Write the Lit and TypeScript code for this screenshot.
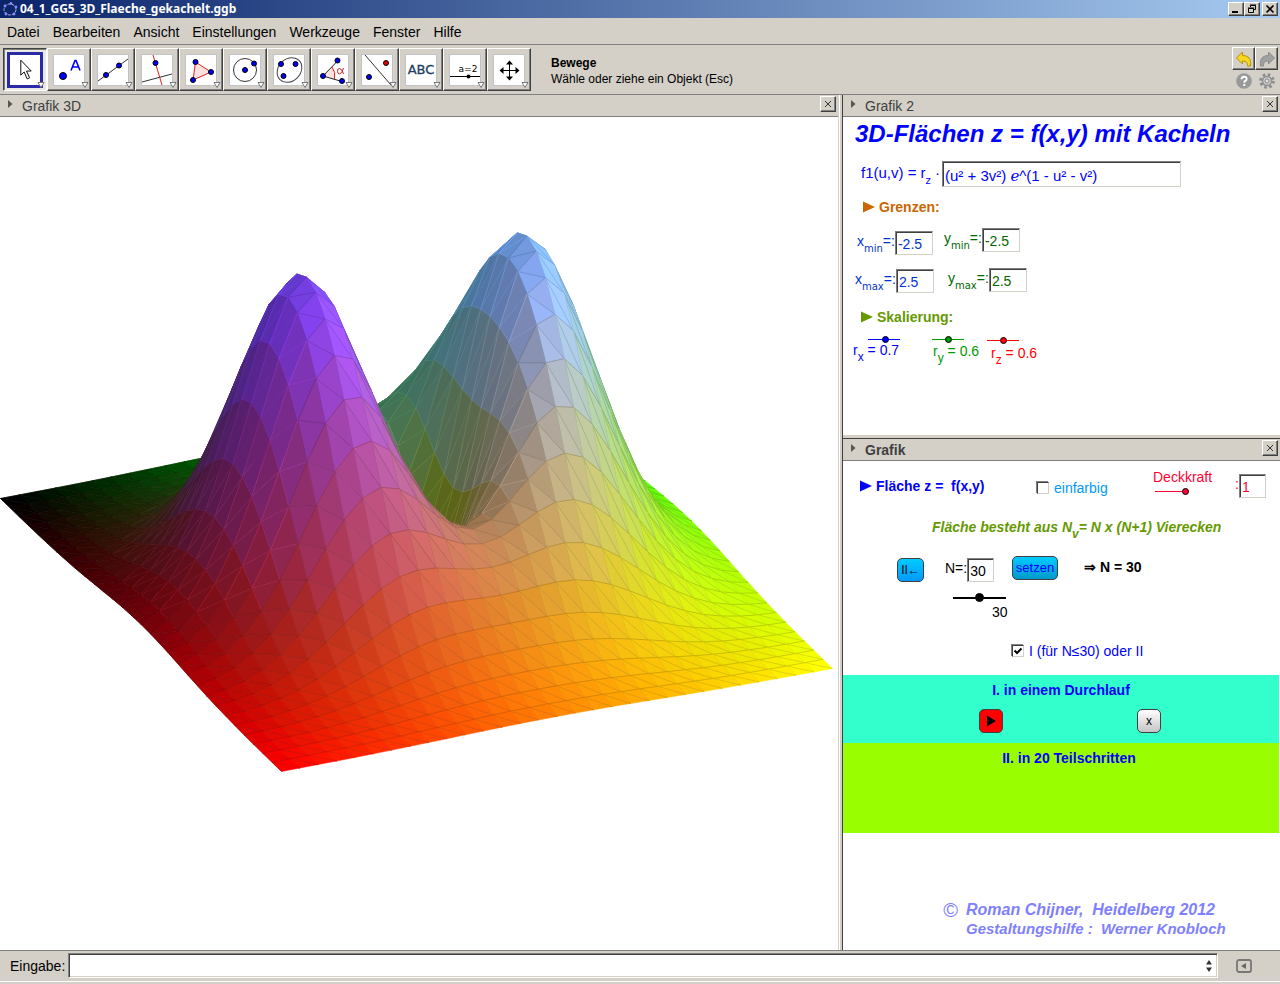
import { LitElement, html, svg, css } from "lit";
import { customElement, property } from "lit/decorators.js";
import { styleMap } from "lit/directives/style-map.js";

const MENUS = ["Datei", "Bearbeiten", "Ansicht", "Einstellungen", "Werkzeuge", "Fenster", "Hilfe"];

const dot = (x: number, y: number, r = 2.5, fill = "#0000ff") =>
  svg`<circle cx=${x} cy=${y} r=${r} fill=${fill} stroke="#000" stroke-width="1"/>`;

const TOOLS = [
  {
    name: "Bewege",
    icon: svg`<path d="M11.5 5.5v16l3.6-3.4 3.2 7.4 2.6-1.2-3.3-7.2h5z" fill="#fff" stroke="#000"/>`,
  },
  {
    name: "Neuer Punkt",
    icon: svg`${dot(10, 22, 3.5)}<path d="M18 16.500l4-10h1l4 10M19.500 13h6" fill="none" stroke="#0000ff" stroke-width="1.600"/>`,
  },
  {
    name: "Gerade",
    icon: svg`<path d="M1 27L31 5" stroke="#333" fill="none"/>${dot(9, 21)}${dot(22, 11.5)}`,
  },
  {
    name: "Senkrechte",
    icon: svg`<path d="M1 28L31 20" stroke="#333" fill="none"/><path d="M12 1l9 30" stroke="#e02020" fill="none"/>${dot(14.5, 9)}`,
  },
  {
    name: "Vieleck",
    icon: svg`<path d="M10.500 8L26 18 8 26z" fill="#fbe0e0" stroke="#e02020"/>${dot(10.5, 8)}${dot(26, 18)}${dot(8, 26)}`,
  },
  {
    name: "Kreis",
    icon: svg`<circle cx="16" cy="16" r="11.500" fill="none" stroke="#333"/>${dot(16, 16)}${dot(25, 9.5)}`,
  },
  {
    name: "Ellipse",
    icon: svg`<ellipse cx="16.500" cy="16" rx="13.500" ry="11" transform="rotate(-45 16.500 16)" fill="none" stroke="#445"/>${dot(8, 10)}${dot(22.5, 10)}${dot(10.5, 22)}`,
  },
  {
    name: "Winkel",
    icon: svg`<path d="M6 22l9-9q4 5 3 12z" fill="#fbe0e0"/><path d="M15 13q4 5 2.500 12" fill="none" stroke="#e02020"/><path d="M21 6.500L6 22l19 5.500" fill="none" stroke="#222"/>
      <path d="M26.500 14q-1.500 6-4 6-2 0-2-2.800t2-2.700q2.500 0 4 5.500" fill="none" stroke="#d02020"/>${dot(6, 22)}${dot(20.5, 6.5)}${dot(25, 27)}`,
  },
  {
    name: "Spiegele",
    icon: svg`<path d="M4 1l26 30" stroke="#333" fill="none"/>${dot(8, 23)}${dot(25, 9, 2.5, "#e00000")}`,
  },
  {
    name: "Text",
    icon: svg`<text x="16" y="20" text-anchor="middle" class="abc">ABC</text>`,
  },
  {
    name: "Schieberegler",
    icon: svg`<text x="19" y="18" text-anchor="middle" class="aeq">a=2</text><path d="M1 22.500h30" stroke="#000"/><circle cx="19.500" cy="22.500" r="2"/>`,
  },
  {
    name: "Verschiebe Zeichenblatt",
    icon: svg`<path d="M16.500 8v17M8 16.500h17" stroke="#000"/><path d="M16.500 6.500l3.500 4h-7zM16.500 26.500l3.500-4h-7zM6.500 16.500l4-3.500v7zM26.500 16.500l-4-3.500v7z"/>`,
  },
];

const N = 30;
const RANGE = 2.5;

const height = (u: number, v: number) => (u * u + 3 * v * v) * Math.exp(1 - u * u - v * v);

const project = (u: number, v: number): [number, number] => [
  416.5 + 56.2 * u + 110.2 * v,
  466.5 + 54.6 * u - 20.6 * v - 109 * height(u, v),
];

const LIGHT = [0.62, 0.46, 0.62];

function brightness(u0: number, v0: number, u1: number, v1: number, u2: number, v2: number) {
  const w = (u: number, v: number) => [140 * u, 120 * v, 120 * height(u, v)];
  const a = w(u0, v0);
  const b = w(u1, v1);
  const c = w(u2, v2);
  const p = [b[0] - a[0], b[1] - a[1], b[2] - a[2]];
  const q = [c[0] - a[0], c[1] - a[1], c[2] - a[2]];
  let n = [p[1] * q[2] - p[2] * q[1], p[2] * q[0] - p[0] * q[2], p[0] * q[1] - p[1] * q[0]];
  const len = Math.hypot(n[0], n[1], n[2]) * (n[2] < 0 ? -1 : 1);
  n = n.map((k) => k / len);
  return 0.8 + 0.32 * (n[0] * LIGHT[0] + n[1] * LIGHT[1] + n[2] * LIGHT[2]);
}

const shade = (c: number[], f: number) =>
  `rgb(${c.map((k) => Math.max(0, Math.min(255, Math.round(k * f * 255)))).join(",")})`;

const pt = (p: [number, number]) => `${p[0].toFixed(1)} ${p[1].toFixed(1)}`;

@customElement("surface-plot")
class SurfacePlot extends LitElement {
  static styles = css`
    :host { display: block; width: 100%; }
    svg { display: block; width: 100%; height: auto; }
  `;

  private tiles() {
    const out: unknown[] = [];
    const step = (2 * RANGE) / N;
    for (let i = 0; i < N; i++) {
      for (let j = N - 1; j >= 0; j--) {
        const u0 = -RANGE + i * step;
        const v0 = -RANGE + j * step;
        const u1 = u0 + step;
        const v1 = v0 + step;
        const h = height(u0 + step / 2, v0 + step / 2);
        const color = [i / (N - 1), j / (N - 1), Math.min(1, h / (h < 0.7 ? 3.4 : 2.8))];
        const a = pt(project(u0, v0));
        const b = pt(project(u1, v0));
        const c = pt(project(u1, v1));
        const d = pt(project(u0, v1));
        const f1 = brightness(u0, v0, u1, v0, u1, v1);
        const f2 = brightness(u0, v0, u1, v1, u0, v1);
        const s1 = shade(color, f1);
        const s2 = shade(color, f2);
        const dim = Math.min(f1, f2) < 0.86;
        out.push(svg`<path d="M${a}L${c}L${d}Z" fill=${s2} stroke=${s2} stroke-width=".5"/>
          <path d="M${a}L${b}L${c}Z" fill=${s1} stroke=${s1} stroke-width=".5"/>
          <path d="M${a}L${c}" fill="none" stroke=${shade(color, f2 * (dim ? 1.2 : 0.76))} stroke-width=".5"/>
          <path d="M${a}L${d}" fill="none" stroke=${shade(color, f2 * (dim ? 1.25 : 0.76))} stroke-width=".7"/>
          <path d="M${a}L${b}" fill="none" stroke=${shade(color, f1 * (dim ? 1.45 : 0.82))} stroke-width=".8"/>`);
      }
    }
    return out;
  }

  render() {
    return html`<svg viewBox="0 0 838 833" role="img" aria-label="3D-Fläche">${this.tiles()}</svg>`;
  }
}

@customElement("view-header")
class ViewHeader extends LitElement {
  @property() name = "";
  @property({ type: Boolean }) active = false;

  static styles = css`
    :host { display: flex; align-items: center; box-sizing: border-box; height: 22px; background: #d4d0c8; border-bottom: 1px solid #808080; color: #404040; font: 14px/20px "Liberation Sans", sans-serif; }
    .arrow { width: 5px; height: 8px; margin: 0 9px 4px 8px; }
    .name { flex: 1; margin: 0; font: inherit; padding-top: 1px; }
    .bold { font-weight: bold; }
    .close { width: 16px; height: 16px; padding: 0; margin: 0 2px 4px; border: 1px solid; border-color: #fff #404040 #404040 #fff; box-shadow: inset -1px -1px #808080; background: #d4d0c8; }
    .close svg { display: block; margin: 3px; }
  `;

  render() {
    return html`<svg class="arrow" viewBox="0 0 5 8"><path d="M0 0l4.500 4L0 8z" fill="#555"/></svg>
      <h2 class="name ${this.active ? "bold" : ""}">${this.name}</h2>
      <button class="close" aria-label="Schließen">
        <svg width="8" height="8" viewBox="0 0 8 8"><path d="M1 1l6 6M7 1L1 7" stroke="#333"/></svg>
      </button>`;
  }
}

const at = (x: number, y: number) => styleMap({ left: `${x}px`, top: `${y}px` });

@customElement("app-root")
class AppRoot extends LitElement {
  static styles = css`
    :host { display: flex; flex-direction: column; min-height: 100vh; background: #d4d0c8; color: #000; font: 14px/20px "Liberation Sans", Arial, sans-serif; }
    * { box-sizing: border-box; }
    button, input { font: inherit; color: inherit; margin: 0; border-radius: 0; }
    h1, h3, p { margin: 0; font: inherit; }

    .titlebar { display: flex; align-items: center; height: 18px; padding: 0 2px; background: linear-gradient(90deg, #0a246a, #a6caf0); color: #fff; }
    .logo { width: 16px; height: 16px; margin-right: 2px; }
    .caption { flex: 1; font: bold 12px/18px "Noto Sans", sans-serif; }
    .winbtn { width: 16px; height: 14px; padding: 0; border: 1px solid; border-color: #fff #404040 #404040 #fff; box-shadow: inset -1px -1px #808080; background: #d4d0c8; color: #000; }
    .winbtn svg { display: block; margin: auto; }
    .winbtn:last-child { margin-left: 2px; }

    .menubar { display: flex; gap: 13px; height: 27px; padding: 4px 7px 0; border-bottom: 1px solid #808080; }
    .menu { padding: 0; border: 0; background: none; height: 20px; }

    .toolbar { display: flex; height: 50px; padding: 3px 2px 0 3px; border-bottom: 1px solid #808080; }
    .tool { position: relative; width: 44px; height: 43px; padding: 5px; border: 1px solid; border-color: #fff #404040 #404040 #fff; box-shadow: inset -1px -1px #808080; background: #d4d0c8; }
    .tool svg { display: block; width: 32px; height: 32px; background: #fff; outline: 1px solid #c0c4c8; outline-offset: -1px; }
    .tool .more { position: absolute; right: 1px; bottom: 1px; width: 8px; height: 8px; background: none; outline: none; }
    .picked { border-color: #404040 #fff #fff #404040; box-shadow: inset 1px 1px #808080; padding: 3px; background: #eae8e3; }
    .picked .face { width: 36px; height: 36px; border: 3px solid #2a2aa5; outline: none; }
    .abc { font: 13px "DejaVu Sans", sans-serif; fill: #1c3c60; stroke: #1c3c60; stroke-width: 0.3px; }
    .aeq { font: 9px "DejaVu Sans", sans-serif; }
    .hint { flex: 1; padding: 7px 20px 0; font-size: 12px; line-height: 16px; }
    .hint strong { display: block; }
    .actions { display: grid; grid-template-columns: 23px 23px; align-content: start; justify-items: center; row-gap: 2px; margin-top: -1px; }
    .act { width: 23px; height: 23px; padding: 2px; border: 1px solid; border-color: #fff #404040 #404040 #fff; box-shadow: inset -1px -1px #808080; background: #d4d0c8; }
    .act svg, .round svg { display: block; }
    .round { width: 18px; height: 18px; padding: 1px; border: 0; background: none; }

    .work { flex: 1; display: grid; grid-template-columns: minmax(0, 839fr) minmax(0, 441fr); background: #fff; }
    .left { border-right: 1px solid #d4d0c8; }
    .right { display: flex; flex-direction: column; border-left: 1px solid #404040; box-shadow: -2px 0 #d4d0c8; margin-left: 3px; }
    .view2 { position: relative; height: 317px; }
    .split { height: 5px; background: #d4d0c8; border-top: 1px solid #fff; border-bottom: 1px solid #404040; }
    .view1 { flex: 1; display: flex; flex-direction: column; }
    .board { position: relative; height: 214px; }
    .obj { position: absolute; white-space: pre; }
    .obj svg { vertical-align: -1px; margin-right: 4px; }
    .heading { font: italic bold 24px/32px "Liberation Sans", sans-serif; color: #0000ff; }
    .bold { font-weight: bold; }
    .nv { font-style: italic; font-weight: bold; }
    sub { font-size: 12px; line-height: 0; vertical-align: -6px; }
    .small sub { font: 10px/0 "DejaVu Sans", sans-serif; }
    .blue { color: #0000ff; }
    .navy { color: #0033cc; }
    .green { color: #006600; }
    .lime { color: #009900; }
    .olive { color: #669900; }
    .orange { color: #cc6600; }
    .red { color: #ff0000; }
    .crimson { color: #ff0033; }
    .sky { color: #0099ff; }
    .field { display: flex; justify-content: space-between; }
    .box { height: 24px; width: 38px; padding: 2px 0 0 2px; border: 1px solid; border-color: #808080 #d4d0c8 #d4d0c8 #808080; box-shadow: inset 1px 1px #404040; background: #fff; outline: 0; }
    .slim { width: 27px; }
    .formula { font-size: 15px; width: 320px; line-height: 23px; }
    .formula .box { width: 239px; height: 26px; padding: 3px 0 0 2px; font: 15px "Liberation Sans", "DejaVu Sans", sans-serif; }
    .w75 { width: 75px; }
    .w77 { width: 77px; }

    .range { appearance: none; width: 32px; height: 9px; background: linear-gradient(currentColor, currentColor) 0 4px / 100% 1px no-repeat; }
    .range::-webkit-slider-thumb { appearance: none; width: 7px; height: 7px; border-radius: 50%; background: currentColor; border: 1px solid #000; }
    .mid { width: 34px; }
    .long { width: 53px; background: linear-gradient(currentColor, currentColor) 0 4px / 100% 2px no-repeat; }
    .long::-webkit-slider-thumb { width: 9px; height: 9px; }

    .tick { display: flex; align-items: center; gap: 5px; }
    .tick input { appearance: none; width: 12px; height: 12px; border: 1px solid; border-color: #404040 #d4d0c8 #d4d0c8 #404040; box-shadow: -1px -1px #808080; background: #fff; }
    .tick input:checked { background: #fff url("data:image/svg+xml,%3Csvg xmlns='http://www.w3.org/2000/svg' viewBox='0 0 10 10'%3E%3Cpath d='M1.500 4.500l2.500 2.500 4.500-4.500' fill='none' stroke='%23000' stroke-width='2'/%3E%3C/svg%3E"); }

    .geo { height: 24px; padding: 0; border: 1px solid #404040; border-radius: 5px; text-align: center; }
    .cyan { width: 27px; background: linear-gradient(#00ccff, #0099ff); font-size: 12px; }
    .set { width: 46px; background: linear-gradient(#00ccff, #0099cc); color: #0000ff; font-size: 13px; }
    .go { width: 24px; background: #ff0000; }
    .go svg { display: block; margin: auto; }
    .stop { width: 24px; background: linear-gradient(#fff, #c4c4c4); font-size: 12px; font-weight: normal; color: #000; }

    .band { margin-right: 1px; padding-top: 5px; text-align: center; font-weight: bold; color: #0000ff; }
    .one { height: 68px; background: #33ffcc; }
    .two { height: 90px; background: #99ff00; padding-left: 16px; }
    .pair { display: flex; justify-content: center; gap: 134px; padding: 9px 0 0 18px; color: #000; }
    .credits { display: grid; grid-template-columns: auto auto; justify-content: center; column-gap: 8px; padding: 67px 0 0 46px; font-style: italic; font-weight: bold; color: #8080ff; }
    .credits p { white-space: pre; }
    .mark { font-style: normal; font-weight: normal; font-size: 20px; }
    .author { font-size: 16px; }
    .helper { grid-column: 2; font-size: 15px; line-height: 18px; }

    .inputbar { display: flex; align-items: center; height: 34px; padding: 0 28px 4px 10px; border-top: 1px solid #808080; box-shadow: inset 0 -2px #d4d0c8, inset 0 -3px #fff; }
    .combo { flex: 1; display: flex; align-items: center; height: 25px; margin-left: 3px; background: #fff; border: 1px solid; border-color: #808080 #fff #fff #808080; box-shadow: inset 1px 1px #404040, inset -1px -1px #d4d0c8; padding-right: 4px; }
    .cmd { flex: 1; height: 20px; border: 0; background: none; outline: 0; }
    .spin { padding: 0; border: 0; background: none; width: 8px; height: 14px; }
    .spin svg { display: block; }
    .side { margin-left: 18px; width: 16px; height: 14px; padding: 0; border: 0; background: none; }
    .side svg { display: block; }
  `;

  private marker() {
    return html`<svg width="12" height="12" viewBox="0 0 12 12"><path d="M0 0.500l12 5.500-12 5.500z" fill="currentColor"/></svg>`;
  }

  private field(id: string, letter: string, sub: string, value: string, x: number, y: number, cls: string) {
    return html`<div class="obj field small ${cls}" style=${at(x, y)}><label for=${id}>${letter}<sub>${sub}</sub>=:</label><input class="box" id=${id} .value=${value} /></div>`;
  }

  private slider(letter: string, value: string, p: number, x: number, y: number, lx: number, ly: number, cls: string) {
    return html`<input class="obj range ${cls}" type="range" id="r${letter}" min="0" max="100" .value=${String(p)} style=${at(x, y)} />
      <label class="obj ${cls}" for="r${letter}" style=${at(lx, ly)}>r<sub>${letter}</sub> = ${value}</label>`;
  }

  render() {
    return html`
      <header class="titlebar">
        <svg class="logo" viewBox="0 0 16 16"><ellipse cx="8" cy="8.500" rx="6" ry="5.500" fill="none" stroke="#b0b0c0" stroke-dasharray="3 1"/>
          ${[[3, 5], [9, 2.5], [14, 6], [12, 13], [4, 13]].map(([x, y]) => svg`<circle cx=${x} cy=${y} r="1.400" fill="#8888ff"/>`)}</svg>
        <h1 class="caption">04_1_GG5_3D_Flaeche_gekachelt.ggb</h1>
        <button class="winbtn" aria-label="Minimieren"><svg width="10" height="10"><path d="M1 8h6" stroke="#000" stroke-width="2"/></svg></button>
        <button class="winbtn" aria-label="Wiederherstellen"><svg width="10" height="10"><path d="M3.500 3V1.500h5v4H7M3 1h6M1.500 4.500h5v4h-5zM1 4h6" fill="none" stroke="#000"/></svg></button>
        <button class="winbtn" aria-label="Beenden"><svg width="10" height="10"><path d="M1.500 1.500l7 7M8.500 1.500l-7 7" stroke="#000" stroke-width="1.600"/></svg></button>
      </header>
      <nav class="menubar">${MENUS.map((m) => html`<button class="menu">${m}</button>`)}</nav>
      <div class="toolbar">
        ${TOOLS.map(
          (t, i) => html`<button class="tool ${i === 0 ? "picked" : ""}" aria-label=${t.name}>
            <svg class="face" viewBox="0 0 32 32">${t.icon}</svg>
            <svg class="more" viewBox="0 0 8 8"><path d="M1 1.500h6L4 6.500z" fill="#fff" stroke="#777"/></svg>
          </button>`,
        )}
        <div class="hint"><strong>Bewege</strong>Wähle oder ziehe ein Objekt (Esc)</div>
        <div class="actions">
          <button class="act" aria-label="Rückgängig"><svg width="18" height="18" viewBox="0 0 18 18"><path d="M1.500 8l6-6v3.500c6 0 9 3.500 8 10.500h-3c0-3.500-1-5-5-5v3z" fill="#f6d820" stroke="#b89000"/></svg></button>
          <button class="act" aria-label="Wiederholen"><svg width="18" height="18" viewBox="0 0 18 18"><path d="M16.500 8l-6-6v3.500c-6 0-9 3.500-8 10.500h3c0-3.500 1-5 5-5v3z" fill="#a0a0a0" stroke="#8a8a8a"/></svg></button>
          <button class="round" aria-label="Hilfe"><svg width="16" height="16" viewBox="0 0 16 16"><circle cx="8" cy="8" r="7.800" fill="#999"/><path d="M5.500 6.300q0-2.600 2.600-2.600t2.500 2.200q0 1.300-1.300 2-1 .6-1 1.800M8.300 11v2" fill="none" stroke="#fff" stroke-width="1.900"/></svg></button>
          <button class="round" aria-label="Einstellungen"><svg width="16" height="16" viewBox="0 0 16 16"><circle cx="8" cy="8" r="6.300" fill="none" stroke="#8c8c8c" stroke-width="3" stroke-dasharray="2.500 2.448"/><circle cx="8" cy="8" r="4.500" fill="#ccc" stroke="#909090" stroke-width="1.500"/><circle cx="8" cy="8" r="2" fill="#e4e2de" stroke="#888"/></svg></button>
        </div>
      </div>
      <main class="work">
        <section class="left">
          <view-header name="Grafik 3D"></view-header>
          <surface-plot></surface-plot>
        </section>
        <div class="right">
          <view-header name="Grafik 2"></view-header>
          <section class="view2">
            <h3 class="obj heading" style=${at(12, 1)}>3D-Flächen z = f(x,y) mit Kacheln</h3>
            <div class="obj field formula small blue" style=${at(18, 44)}><label for="f1">f1(u,v) = r<sub>z</sub> ·</label><input class="box" id="f1" .value=${"(u² + 3v²) ℯ^(1 - u² - v²)"} /></div>
            <div class="obj bold orange" style=${at(20, 80)}>${this.marker()}Grenzen:</div>
            ${this.field("xmin", "x", "min", "-2.5", 14, 114, "navy w75")}
            ${this.field("ymin", "y", "min", "-2.5", 101, 111, "green w75")}
            ${this.field("xmax", "x", "max", "2.5", 12, 152, "navy w77")}
            ${this.field("ymax", "y", "max", "2.5", 105, 151, "green w77")}
            <div class="obj bold olive" style=${at(18, 190)}>${this.marker()}Skalierung:</div>
            ${this.slider("x", "0.7", 56, 25, 218, 10, 223, "blue")}
            ${this.slider("y", "0.6", 52, 89, 218, 90, 224, "lime")}
            ${this.slider("z", "0.6", 52, 144, 219, 148, 226, "red")}
          </section>
          <div class="split"></div>
          <view-header name="Grafik" active></view-header>
          <section class="view1">
            <div class="board">
              <div class="obj bold blue" style=${at(17, 15)}>${this.marker()}Fläche z =  f(x,y)</div>
              <label class="obj tick sky" style=${at(194, 17)}><input type="checkbox" />einfarbig</label>
              <label class="obj crimson" for="deck" style=${at(310, 6)}>Deckkraft</label>
              <input class="obj range mid crimson" type="range" id="deck" min="0" max="100" .value=${"100"} style=${at(312, 26)} />
              <div class="obj field crimson" style=${at(392, 13)}><label for="deckv">:</label><input class="box slim" id="deckv" .value=${"1"} /></div>
              <div class="obj nv olive" style=${at(89, 56)}>Fläche besteht aus N<sub>v</sub>= N x (N+1) Vierecken</div>
              <button class="obj geo cyan" style=${at(54, 97)}>II←</button>
              <div class="obj field" style=${at(102, 97)}><label for="nval">N=:</label><input class="box slim" id="nval" .value=${"30"} /></div>
              <button class="obj geo set" style=${at(169, 95)}>setzen</button>
              <div class="obj bold" style=${at(241, 96)}>⇒ N = 30</div>
              <input class="obj range long" type="range" id="n" min="0" max="100" .value=${"50"} style=${at(110, 132)} />
              <label class="obj" for="n" style=${at(149, 141)}>30</label>
              <label class="obj tick blue" style=${at(169, 180)}><input type="checkbox" checked />I (für N≤30) oder II</label>
            </div>
            <div class="band one">I. in einem Durchlauf
              <div class="pair">
                <button class="geo go" aria-label="Start"><svg width="10" height="12"><path d="M1 0.500l9 5.500-9 5.500z"/></svg></button>
                <button class="geo stop">x</button>
              </div>
            </div>
            <div class="band two">II. in 20 Teilschritten</div>
            <footer class="credits">
              <span class="mark">©</span>
              <p class="author">Roman Chijner,  Heidelberg 2012</p>
              <p class="helper">Gestaltungshilfe :  Werner Knobloch</p>
            </footer>
          </section>
        </div>
      </main>
      <footer class="inputbar">
        <label for="cmd">Eingabe:</label>
        <div class="combo">
          <input class="cmd" id="cmd" />
          <button class="spin" aria-label="Verlauf"><svg width="8" height="14" viewBox="0 0 8 14"><path d="M4 1l3 4.500H1zM4 13l3-4.500H1z" fill="#333"/></svg></button>
        </div>
        <button class="side" aria-label="Eingabehilfe"><svg width="16" height="14" viewBox="0 0 16 14"><rect x="1" y="1" width="14" height="12" rx="2" fill="none" stroke="#777" stroke-width="1.800"/><path d="M5 7l5-3v6z" fill="#666"/></svg></button>
      </footer>
    `;
  }
}
